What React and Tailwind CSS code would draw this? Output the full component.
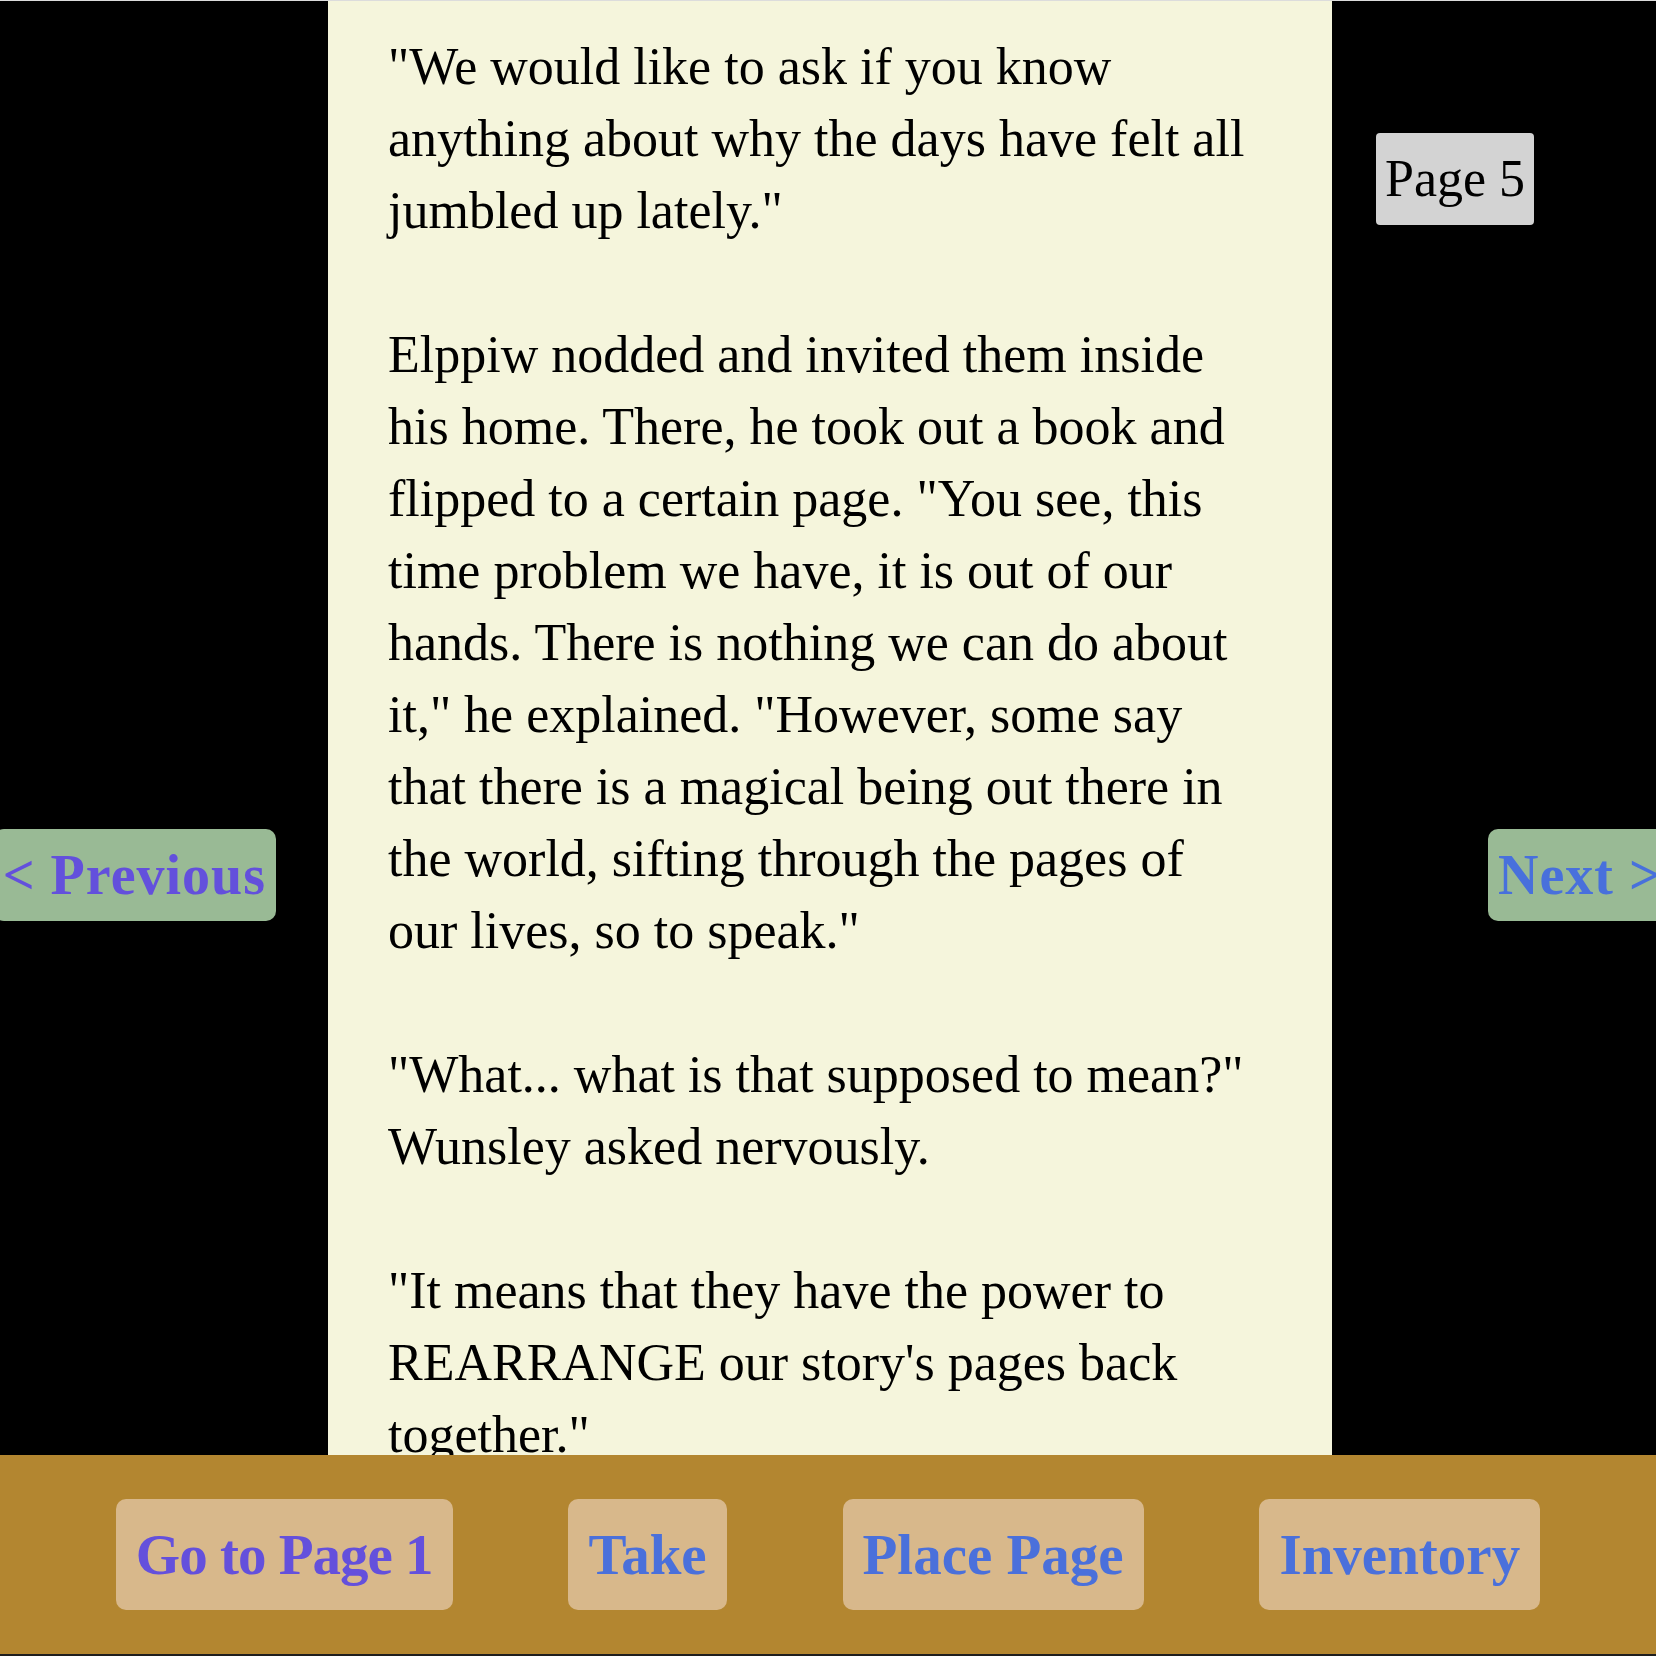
import React, { useState } from "react";

const paragraphs = [
  '"We would like to ask if you know anything about why the days have felt all jumbled up lately."',
  'Elppiw nodded and invited them inside his home. There, he took out a book and flipped to a certain page. "You see, this time problem we have, it is out of our hands. There is nothing we can do about it," he explained. "However, some say that there is a magical being out there in the world, sifting through the pages of our lives, so to speak."',
  '"What... what is that supposed to mean?" Wunsley asked nervously.',
  '"It means that they have the power to REARRANGE our story\'s pages back together."',
];

export default function App() {
  const [page] = useState(5);

  return (
    <div className="h-screen w-full overflow-hidden bg-black border-t border-[#dcdcdc] flex flex-col font-['Liberation_Serif',serif]">
      {/* Reading area */}
      <div className="flex-1 flex min-h-0">
        {/* Left side */}
        <div className="w-[328px] shrink-0 flex flex-col">
          <button className="mt-[828px] -ml-[6px] w-[282px] flex justify-end pr-[10px] py-[10px] bg-[#99ba95] rounded-[10px] text-[56px] leading-[72px] tracking-[1px] font-bold text-[#6350dc] whitespace-nowrap">
            &lt; Previous
          </button>
        </div>

        {/* Page */}
        <div className="w-[1004px] shrink-0 bg-[#f5f5dc] overflow-hidden pl-[60px] pr-[66px] pt-[30px]">
          <div className="flex flex-col gap-[72px] text-[52px] leading-[72px] text-black">
            {paragraphs.map((p, i) => (
              <p key={i}>{p}</p>
            ))}
          </div>
        </div>

        {/* Right side */}
        <div className="flex-1 flex flex-col items-start">
          <div className="mt-[132px] ml-[44px] px-[9px] py-[10px] bg-[#d3d3d3] rounded-[4px] text-[52px] leading-[72px] text-black whitespace-nowrap">
            Page {page}
          </div>
          <button className="mt-[604px] ml-[156px] pl-[10px] pr-[10px] py-[10px] bg-[#99ba95] rounded-[10px] text-[56px] leading-[72px] tracking-[1px] font-bold text-[#4870dc] whitespace-nowrap">
            Next &gt;
          </button>
        </div>
      </div>

      {/* Bottom bar */}
      <div className="h-[201px] shrink-0 bg-[#b38630] border-b-2 border-[#1e1e1e] flex items-center justify-evenly">
        <button className="px-[20px] py-[20px] bg-[#d8b88b] rounded-[10px] text-[57px] leading-[71px] tracking-[-1px] font-bold text-[#6450dc] whitespace-nowrap">
          Go to Page 1
        </button>
        <button className="px-[20px] py-[20px] bg-[#d8b88b] rounded-[10px] text-[57px] leading-[71px] font-bold text-[#4a70db] whitespace-nowrap">
          Take
        </button>
        <button className="px-[20px] py-[20px] bg-[#d8b88b] rounded-[10px] text-[57px] leading-[71px] font-bold text-[#4a70db] whitespace-nowrap">
          Place Page
        </button>
        <button className="px-[20px] py-[20px] bg-[#d8b88b] rounded-[10px] text-[57px] leading-[71px] font-bold text-[#4a70db] whitespace-nowrap">
          Inventory
        </button>
      </div>
    </div>
  );
}
